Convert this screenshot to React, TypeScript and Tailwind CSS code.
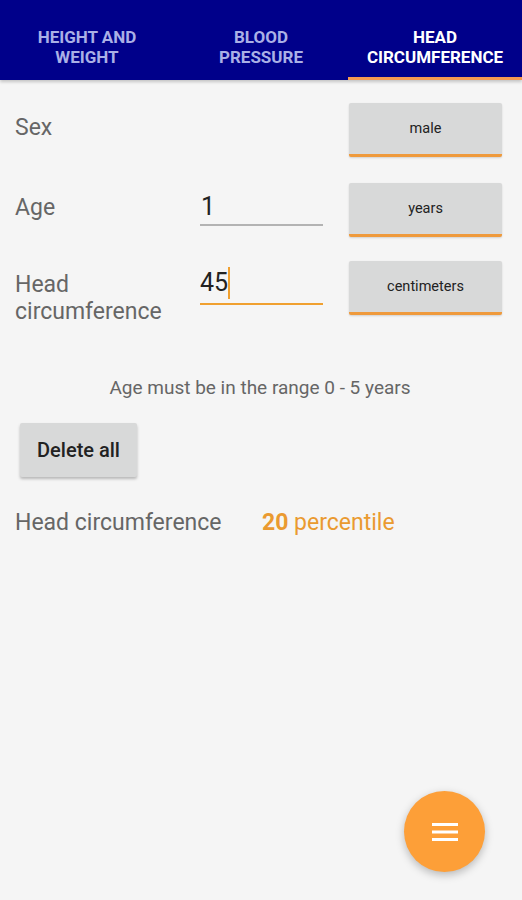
import React from "react";

const font = { fontFamily: "Roboto, 'Liberation Sans', sans-serif" };

function UnitButton({ label }: { label: string }) {
  return (
    <div className="w-[153px] h-[54px] bg-[#d8d9d9] rounded-[2px] shadow-[0_1px_2px_rgba(0,0,0,0.15)] flex flex-col overflow-hidden">
      <div className="flex-1 flex items-center justify-center text-[14.5px] text-[#222]">{label}</div>
      <div className="h-[3px] bg-[#ef9a3c]" />
    </div>
  );
}

export default function App() {
  return (
    <div className="relative min-h-[900px] w-[522px] bg-[#f5f5f5]" style={font}>
      <div className="h-[80px] bg-[#00008a] grid grid-cols-3 shadow-[0_2px_3px_rgba(0,0,0,0.2)]">
        <div className="flex flex-col items-center pt-[27px] text-center text-[17px] font-bold leading-[20px] text-[#aab0e6]">
          <span>HEIGHT AND</span>
          <span>WEIGHT</span>
        </div>
        <div className="flex flex-col items-center pt-[27px] text-center text-[17px] font-bold leading-[20px] text-[#aab0e6]">
          <span>BLOOD</span>
          <span>PRESSURE</span>
        </div>
        <div className="flex flex-col items-center pt-[27px] text-center text-[17px] font-bold leading-[20px] text-white border-b-[3px] border-[#f59a52]">
          <span>HEAD</span>
          <span>CIRCUMFERENCE</span>
        </div>
      </div>

      <div className="pl-[15px]">
        <div className="flex items-center mt-[23px]">
          <div className="w-[185px] text-[23px] leading-[28px] text-[#666] pb-[4px]">Sex</div>
          <div className="w-[123px]" />
          <div className="ml-[26px]"><UnitButton label="male" /></div>
        </div>

        <div className="flex items-center mt-[26px]">
          <div className="w-[185px] text-[23px] leading-[28px] text-[#666] pb-[5px]">Age</div>
          <div className="w-[123px] h-[44px] flex flex-col justify-end">
            <div className="text-[25px] leading-[28px] text-[#222] pl-[1px]">1</div>
            <div className="h-[2px] bg-[#b3b3b3] mt-[3px] mb-[6px]" />
          </div>
          <div className="ml-[26px]"><UnitButton label="years" /></div>
        </div>

        <div className="flex items-start mt-[24px]">
          <div className="w-[185px] text-[23px] leading-[27px] text-[#666] pt-[10px]">
            Head<br />circumference
          </div>
          <div className="w-[123px] flex flex-col pt-[6px]">
            <div className="flex items-center h-[32px]">
              <span className="text-[25px] leading-[28px] text-[#222]">45</span>
              <span className="w-[2px] h-[32px] bg-[#f0a030]" />
            </div>
            <div className="h-[2px] bg-[#f0a030] mt-[4px]" />
          </div>
          <div className="ml-[26px]"><UnitButton label="centimeters" /></div>
        </div>
      </div>

      <div className="mt-[51px] text-center text-[19px] leading-[24px] text-[#666] pr-[2px]">
        Age must be in the range 0 - 5 years
      </div>

      <div className="pl-[20px] mt-[23px]">
        <div className="w-[117px] h-[54px] bg-[#d8d9d9] rounded-[2px] shadow-[0_2px_3px_rgba(0,0,0,0.25)] flex items-center justify-center text-[20px] font-medium text-[#222]">
          Delete all
        </div>
      </div>

      <div className="flex items-center pl-[15px] mt-[32px] text-[23px] leading-[28px]">
        <div className="w-[247px] text-[#666]">Head circumference</div>
        <div className="text-[#ea9a30]">
          <span className="font-bold">20</span> percentile
        </div>
      </div>

      <div className="absolute right-[37px] bottom-[28px] w-[81px] h-[81px] rounded-full bg-[#fd9f38] shadow-[0_3px_8px_rgba(0,0,0,0.25)] flex items-center justify-center">
        <svg width="26" height="20" viewBox="0 0 26 20">
          <rect x="0" y="1" width="26" height="3" fill="#fff" />
          <rect x="0" y="8.5" width="26" height="3" fill="#fff" />
          <rect x="0" y="16" width="26" height="3" fill="#fff" />
        </svg>
      </div>
    </div>
  );
}
